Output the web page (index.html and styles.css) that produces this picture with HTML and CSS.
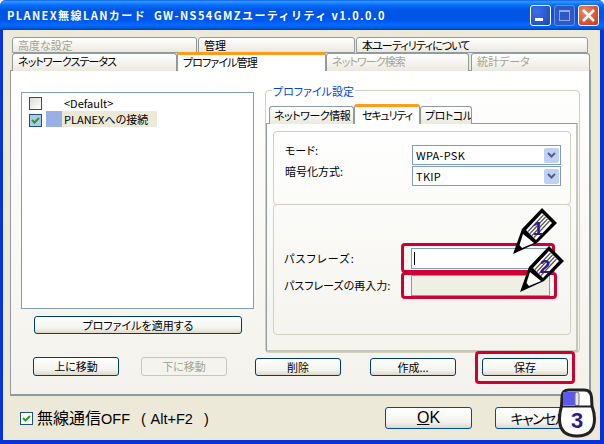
FILE: index.html
```html
<!DOCTYPE html>
<html lang="ja">
<head>
<meta charset="utf-8">
<title>PLANEX</title>
<link rel="stylesheet" href="styles.css">
</head>
<body>
<div class="win">
  <header class="title">
    <span class="title-text">PLANEX無線LANカード&nbsp; GW-NS54GMZユーティリティ v1.0.0.0</span>
    <div class="caps">
      <span class="cap"><svg width="21" height="21" viewBox="0 0 21 21"><rect x="5" y="13" width="8" height="3" fill="#fff"/></svg></span>
      <span class="cap cap-off"><svg width="21" height="21" viewBox="0 0 21 21"><rect x="5.5" y="5.5" width="10" height="10" fill="none" stroke="#8ea9e6"/><rect x="5" y="5" width="11" height="2" fill="#8ea9e6"/></svg></span>
      <span class="cap cap-close"><svg width="21" height="21" viewBox="0 0 21 21"><path d="M5 5L16 16M16 5L5 16" stroke="#fff" stroke-width="2.6"/></svg></span>
    </div>
  </header>
  <main class="client">
    <div class="tabs tabs-top">
      <div class="tab off w-a">高度な設定</div>
      <div class="tab w-b">管理</div>
      <div class="tab w-c">本ユーティリティについて</div>
    </div>
    <div class="tabs tabs-low">
      <div class="tab w-d">ネットワークステータス</div>
      <div class="tab active w-e">プロファイル管理</div>
      <div class="tab off w-f">ネットワーク検索</div>
      <div class="tab off w-g">統計データ</div>
    </div>
    <section class="panel">
      <div class="panel-main">
        <div class="left">
          <div class="list">
            <div class="row"><span class="chk"></span><span class="swatch none"></span><span class="name">&lt;Default&gt;</span></div>
            <div class="row"><span class="chk chk-on"><svg width="11" height="11" viewBox="0 0 11 11"><path d="M2 5l2.500 2.500L9 3" fill="none" stroke="#21a121" stroke-width="2"/></svg></span><span class="swatch"></span><span class="name sel">PLANEXへの接続</span></div>
          </div>
          <button class="btn btn-apply">プロファイルを適用する</button>
        </div>
        <div class="group">
          <div class="legend">プロファイル設定</div>
          <div class="tabs tabs-inner">
            <div class="tab w-h">ネットワーク情報</div>
            <div class="tab active w-i">セキュリティ</div>
            <div class="tab w-j">プロトコル</div>
          </div>
          <div class="inner">
            <div class="sub sub-top">
              <div class="form">
                <label class="lab">モード:</label>
                <div class="select"><span>WPA-PSK</span><i class="drop"><svg width="11" height="9" viewBox="0 0 11 9"><path d="M2 2l3.500 3.500L9 2" fill="none" stroke="#4d6185" stroke-width="2"/></svg></i></div>
                <label class="lab">暗号化方式:</label>
                <div class="select"><span>TKIP</span><i class="drop"><svg width="11" height="9" viewBox="0 0 11 9"><path d="M2 2l3.500 3.500L9 2" fill="none" stroke="#4d6185" stroke-width="2"/></svg></i></div>
              </div>
            </div>
            <div class="sub sub-low">
              <div class="form form-pass">
                <label class="lab lab-wide">パスフレーズ:</label>
                <div class="input"><span class="caret"></span></div>
                <label class="lab">パスフレーズの再入力:</label>
                <div class="input input-off"></div>
              </div>
            </div>
          </div>
        </div>
      </div>
      <div class="actions">
        <button class="btn">上に移動</button>
        <button class="btn btn-off gap-22">下に移動</button>
        <button class="btn gap-28 low">削除</button>
        <button class="btn gap-29 low">作成...</button>
        <button class="btn gap-26 low">保存</button>
      </div>
    </section>
    <footer class="foot">
      <span class="chk chk-foot"><svg width="11" height="11" viewBox="0 0 11 11"><path d="M2 5l2.500 2.500L9 3" fill="none" stroke="#21a121" stroke-width="2"/></svg></span>
      <span class="foot-label">無線通信<span class="foot-latin">OFF  ( Alt+F2  )</span></span>
      <button class="btn btn-big btn-ok"><u>O</u>K</button>
      <button class="btn btn-big btn-cancel">キャンセル</button>
    </footer>
  </main>

  <div class="mark mark-1"></div>
  <div class="mark mark-2"></div>
  <div class="mark mark-3"></div>

  <svg class="pencil pencil-1" width="50" height="50" viewBox="0 0 50 50">
    <path d="M1 47L10 22L30 1L45 16L25 36Z" fill="#000"/>
    <path d="M14 23L30 6L40 16L24 33Z" fill="#fff"/>
    <path d="M16 24.500L31.500 8M18 26.500L33.500 10M20 28.500L35.500 12M22 30.500L37.500 14" stroke="#555" stroke-width="1.200"/>
    <path d="M11 27L22 36L10 41L7.500 38Z" fill="#fff"/>
    <text x="26" y="28" class="pen-num">1</text>
  </svg>
  <svg class="pencil pencil-2" width="50" height="50" viewBox="0 0 50 50">
    <path d="M1 47L10 22L30 1L45 16L25 36Z" fill="#000"/>
    <path d="M14 23L30 6L40 16L24 33Z" fill="#fff"/>
    <path d="M16 24.500L31.500 8M18 26.500L33.500 10M20 28.500L35.500 12M22 30.500L37.500 14" stroke="#555" stroke-width="1.200"/>
    <path d="M11 27L22 36L10 41L7.500 38Z" fill="#fff"/>
    <text x="26" y="28" class="pen-num">2</text>
  </svg>
  <svg class="mouse" width="38" height="50" viewBox="0 0 38 50">
    <path d="M4 9Q4 2 11 2H26Q33 2 33.500 9L34 18Q36.500 25 36.500 31Q36.500 48 19 48Q1.500 48 1.500 31Q1.500 25 3.500 18Z" fill="#fff" stroke="#222" stroke-width="3"/>
    <rect x="5" y="4" width="13" height="13" fill="#5a5af0"/>
    <rect x="17" y="4" width="4" height="14" rx="2" fill="#e4e4e4" stroke="#777"/>
    <path d="M3 18.500H34" stroke="#222" stroke-width="2"/>
    <text x="19" y="40" class="mouse-num">3</text>
  </svg>
</div>
</body>
</html>
```
FILE: styles.css
```css
* { box-sizing: border-box; }
html, body { margin: 0; padding: 0; }
body { width: 604px; height: 444px; overflow: hidden; background: #fff; }
body, button {
  font-family: "Noto Sans CJK JP", "Liberation Sans", sans-serif;
  font-size: 11px;
  font-feature-settings: "palt";
  color: #000;
}
.win {
  position: relative;
  width: 604px;
  height: 444px;
  display: flex;
  flex-direction: column;
  background: #0831d9;
  border-radius: 6px 6px 0 0;
  overflow: hidden;
}
.title {
  height: 30px;
  flex: none;
  display: flex;
  align-items: center;
  justify-content: space-between;
  padding: 0 5px 0 7px;
  background: linear-gradient(#0058ee 0, #3593ff 4%, #288eff 8%, #127dff 12%, #0369f5 20%, #0057e5 32%, #0054e3 50%, #0055eb 62%, #005bf5 72%, #026afe 82%, #0062ef 90%, #0052d6 95%, #0040ab 100%);
}
.title-text {
  color: #fff;
  font-weight: 700;
  font-size: 11px;
  letter-spacing: 1.42px;
  white-space: pre;
  font-feature-settings: normal;
}
.caps { display: flex; gap: 3px; margin-top: 1px; }
.cap {
  width: 21px;
  height: 21px;
  border: 1px solid #fff;
  border-radius: 3px;
  background: radial-gradient(circle at 30% 30%, #3c6fe8, #2553c8 70%, #1c44b4);
  overflow: hidden;
  display: block;
}
.cap svg { display: block; margin: -1px; }
.cap-off { border-color: #6f8fdc; background: #2c58c8; }
.cap-close { background: radial-gradient(circle at 30% 30%, #e88a6c, #d5502f 65%, #c0391c); }

.client {
  flex: 1;
  margin: 0 4px 4px 3px;
  background: #ece9d8;
  padding: 7px 9px 0 7px;
  display: flex;
  flex-direction: column;
}
.tabs { display: flex; align-items: flex-end; }
.tabs-top { height: 16px; padding-left: 2px; gap: 1px; }
.tabs-low { height: 18px; padding-left: 2px; position: relative; z-index: 2; margin-bottom: -1px; }
.tab {
  height: 100%;
  border: 1px solid #919b9c;
  border-bottom: 0;
  border-radius: 3px 3px 0 0;
  background: linear-gradient(#fff, #f3f2ec 60%, #eae8df);
  padding-left: 5px;
  line-height: 15px;
  letter-spacing: -0.9px;
  white-space: nowrap;
  overflow: hidden;
}
.tabs-top .tab { border-bottom: 1px solid #919b9c; }
.w-a { width: 185px; }
.w-b { width: 157px; }
.w-c { width: 232px; }
.w-d { width: 165px; }
.w-e { width: 149px; }
.w-f { width: 143px; }
.w-g { width: 119px; margin-left: 2px; }
.tabs-top .w-a, .tabs-top .w-b { letter-spacing: 0; }
.w-g { letter-spacing: 0; }
.off { color: #a3a394; }
.active {
  position: relative;
  height: 19px;
  background: #fff;
  border-top: 3px solid #ff9c1c;
  line-height: 14px;
  z-index: 3;
}
.panel {
  height: 326px;
  border: 1px solid #919b9c;
  background: linear-gradient(#fff, #f3f2ec);
  border-right-width: 2px;
  border-bottom-width: 2px;
  display: flex;
  flex-direction: column;
}
.panel-main { display: flex; padding: 21px 0 0 10px; }
.left { width: 233px; flex: none; }
.list {
  height: 217px;
  border: 1px solid #7f9db9;
  background: #fff;
  padding: 2px 0 0 7px;
}
.row { display: flex; align-items: center; height: 16px; }
.chk {
  flex: none;
  width: 13px;
  height: 13px;
  border: 1px solid #1c5180;
  background: linear-gradient(135deg, #dcdcd7, #fff);
  display: block;
}
.chk svg { display: block; }
.chk-on { background: #b2c8e8; margin-top: 2px; }
.swatch { width: 16px; height: 16px; margin-left: 4px; background: #99b1e2; flex: none; }
.swatch.none { background: transparent; }
.name { padding: 0 2px; height: 16px; line-height: 16px; white-space: nowrap; }
.sel { background: #ece9d8; width: 95px; }
.btn {
  display: block;
  width: 86px;
  height: 19px;
  padding: 0;
  border: 1px solid #003c74;
  border-radius: 3px;
  background: linear-gradient(#fff, #f3f3ee 70%, #dcd8ca);
  font-size: 11px;
  line-height: 15px;
  text-align: center;
}
.btn-apply { width: 208px; height: 18px; margin: 7px 0 0 13px; }
.btn-off { border-color: #c9c7ba; background: #f4f3ee; color: #a3a394; }
.group {
  width: 315px;
  height: 263px;
  margin: -2px 0 0 11px;
  border: 1px solid #d0d0bf;
  border-radius: 4px;
}
.legend {
  display: table;
  height: 14px;
  margin: -7px 0 0 6px;
  padding: 0 1px;
  background: #fff;
  color: #0046d5;
  line-height: 14px;
}
.tabs-inner { height: 20px; margin: 6px 0 -1px; padding-left: 3px; position: relative; z-index: 2; }
.tabs-inner .tab { height: 18px; line-height: 17px; padding-left: 4px; letter-spacing: -0.5px; }
.tabs-inner .active { height: 20px; line-height: 16px; padding-left: 7px; letter-spacing: -1.2px; }
.w-h { width: 85px; }
.w-i { width: 66px; }
.w-j { width: 52px; }
.inner {
  width: 312px;
  height: 229px;
  border: 1px solid #919b9c;
  border-right: 2px solid #c4c6bc;
  border-bottom: 2px solid #c4c6bc;
  background: linear-gradient(#fff, #f4f3ee);
  padding: 7px 0 0 6px;
}
.sub { width: 298px; border: 1px solid #d0d0bf; border-radius: 4px; }
.sub-top { height: 74px; padding: 13px 0 0 11px; }
.sub-low { height: 131px; margin-top: -1px; padding: 43px 0 0 10px; }
.form { display: grid; grid-template-columns: 127px 149px; row-gap: 1px; grid-auto-rows: 20px; }
.form-pass { grid-template-columns: 127px 139px; row-gap: 6px; grid-auto-rows: 21px; }
.lab { line-height: 11px; white-space: nowrap; }
.form-pass .lab { line-height: 21px; }
.form-pass .lab-wide { letter-spacing: 1.2px; }
.select {
  border: 1px solid #7f9db9;
  background: #fff;
  display: flex;
  align-items: center;
  justify-content: space-between;
  padding: 1px 1px 1px 3px;
}
.select span { line-height: 16px; letter-spacing: 0.3px; }
.drop {
  width: 15px;
  height: 15px;
  border-radius: 2px;
  background: #c0d0f8;
  display: flex;
  align-items: center;
  justify-content: center;
}
.input { border: 1px solid #7f9db9; background: #fff; padding: 3px 0 0 2px; }
.input-off { background: #f0efe6; }
.caret { display: block; width: 1px; height: 13px; background: #000; }
.actions { display: flex; align-items: flex-start; padding: 3px 0 0 22px; margin-top: 1px; }
.gap-22 { margin-left: 22px; }
.gap-28 { margin-left: 28px; }
.gap-29 { margin-left: 29px; }
.gap-26 { margin-left: 26px; }
.low { height: 18px; margin-top: 1px; }
.foot { display: flex; align-items: center; height: 40px; padding-left: 10px; }
.chk-foot { background: #fff; margin-top: 4px; }
.foot-label {
  font-size: 16px;
  margin: 2px 0 0 4px;
  width: 348px;
  white-space: pre;
}
.foot-latin {
  font-family: "Liberation Sans", sans-serif;
  font-size: 14.5px;
  word-spacing: 1.5px;
}
.btn-big { width: 87px; height: 22px; font-size: 16px; line-height: 18px; border-color: #004e98; margin-top: 4px; }
.btn-cancel { margin-left: 23px; font-size: 14px; letter-spacing: -1.5px; }
.btn-ok { font-family: "Liberation Sans", sans-serif; }

.mark { position: absolute; border: 3px solid #cc0033; border-radius: 4px; }
.mark-1 { left: 401px; top: 243px; width: 154px; height: 30px; }
.mark-2 { left: 401px; top: 272px; width: 156px; height: 27px; }
.mark-3 { left: 475px; top: 351px; width: 100px; height: 33px; }
.pencil { position: absolute; }
.pencil-1 { left: 512px; top: 207px; }
.pencil-2 { left: 519px; top: 245px; }
.pen-num { font: 700 19px "Liberation Sans", sans-serif; fill: #2e1a80; text-anchor: middle; }
.mouse { position: absolute; left: 558px; top: 388px; }
.mouse-num { font: 700 22px "Liberation Sans", sans-serif; fill: #2e1a80; text-anchor: middle; }
```
